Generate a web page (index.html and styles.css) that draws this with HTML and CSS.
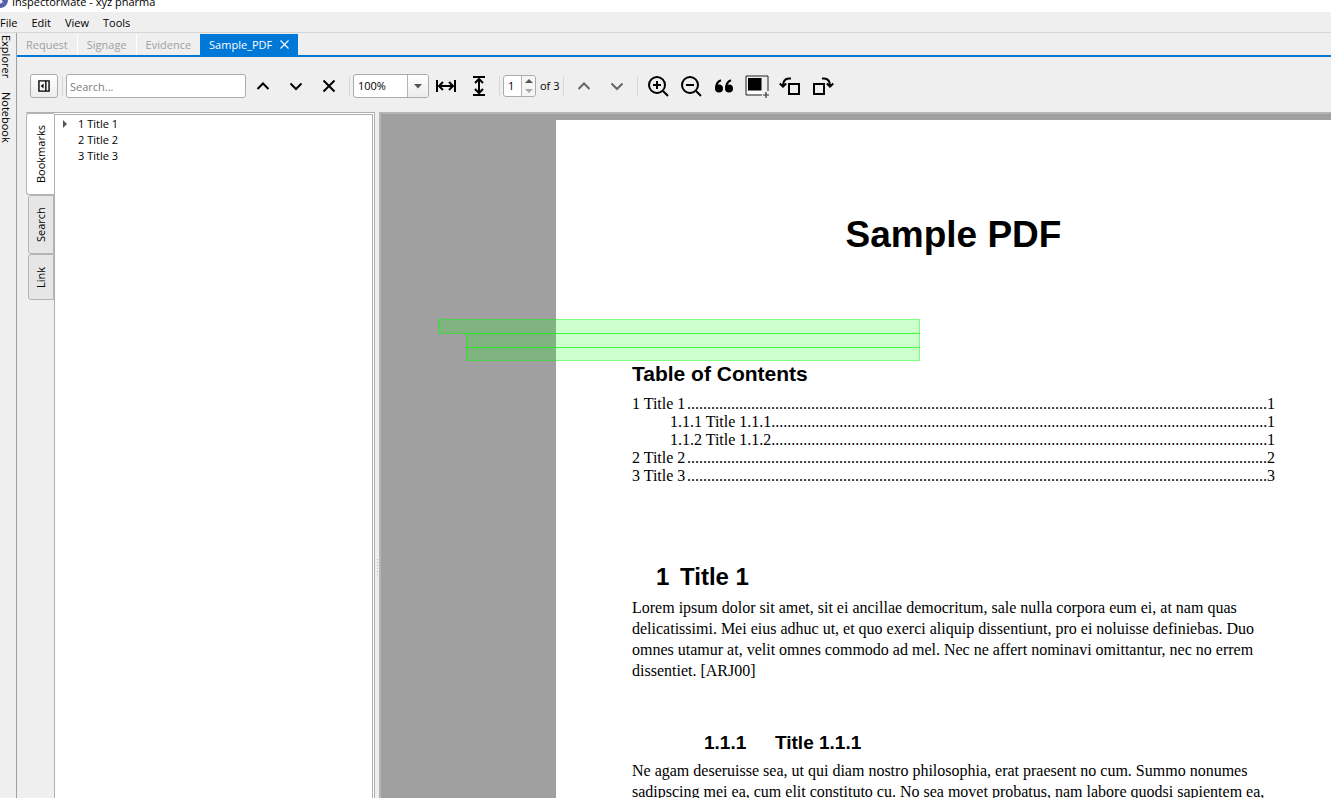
FILE: index.html
```html
<!DOCTYPE html>
<html lang="en">
<head>
<meta charset="utf-8">
<title>InspectorMate - xyz pharma</title>
<link rel="stylesheet" href="styles.css">
</head>
<body>
<header class="titlebar">
  <svg class="app-logo" width="16" height="16" viewBox="0 0 16 16" aria-hidden="true"><circle cx="8" cy="8" r="8" fill="#4a62a8"/><path d="M3 6l6 6 3-1-5-7z" fill="#e8edf8"/><path d="M9 12l4 1-2-4z" fill="#7b5fb0"/></svg>
  <span>InspectorMate - xyz pharma</span>
</header>
<nav class="menubar">
  <button class="menu">File</button>
  <button class="menu">Edit</button>
  <button class="menu">View</button>
  <button class="menu">Tools</button>
</nav>
<div class="workspace">
  <aside class="dock">
    <button class="dock-tab">Explorer</button>
    <button class="dock-tab">Notebook</button>
  </aside>
  <main class="main">
    <div class="tabs">
      <button class="tab">Request</button>
      <button class="tab">Signage</button>
      <button class="tab">Evidence</button>
      <button class="tab tab-active">Sample_PDF
        <svg width="9" height="9" viewBox="0 0 9 9" aria-hidden="true"><path d="M.5.5l8 8M8.5.5l-8 8" stroke="#fff" stroke-width="1.1"/></svg>
      </button>
    </div>
    <div class="toolbar">
      <button class="toggle" aria-label="Toggle side panel">
        <svg width="12" height="12" viewBox="0 0 13 13"><path d="M1 1h11v11H1zM8.500 1v11" fill="none" stroke="#000" stroke-width="1.500"/><path d="M6 3.800v5.400L3 6.500z"/></svg>
      </button>
      <span class="sep"></span>
      <input class="search" type="text" placeholder="Search..." aria-label="Search">
      <button class="tool" aria-label="Previous match"><svg width="24" height="24" viewBox="0 0 24 24"><path d="M6.500 15L12 9.500l5.500 5.500" class="line"/></svg></button>
      <button class="tool" aria-label="Next match"><svg width="24" height="24" viewBox="0 0 24 24"><path d="M6.500 9.500L12 15l5.500-5.500" class="line"/></svg></button>
      <button class="tool" aria-label="Clear search"><svg width="24" height="24" viewBox="0 0 24 24"><path d="M6.500 6.500l11 11M17.500 6.500l-11 11" class="line"/></svg></button>
      <span class="sep"></span>
      <span class="zoom-box">
        <select class="zoom" aria-label="Zoom"><option>100%</option></select>
        <span class="zoom-arrow"><svg width="8" height="5" viewBox="0 0 8 5"><path d="M0 0h8L4 4.500z" fill="#555"/></svg></span>
      </span>
      <button class="tool" aria-label="Fit width"><svg width="24" height="24" viewBox="0 0 24 24"><path d="M3 6v12M21 6v12M5.500 12h13M9 8l-4 4 4 4M15 8l4 4-4 4" class="line"/></svg></button>
      <button class="tool" aria-label="Fit height"><svg width="24" height="24" viewBox="0 0 24 24"><path d="M6 3h12M6 21h12M12 5.500v13M8 9l4-4 4 4M8 15l4 4 4-4" class="line"/></svg></button>
      <span class="sep"></span>
      <span class="spin">
        <input class="spin-input" type="text" value="1" aria-label="Page">
        <span class="spin-arrows">
          <button class="spin-btn" aria-label="Page up"><svg width="8" height="4" viewBox="0 0 8 4"><path d="M0 4h8L4 0z" fill="#555"/></svg></button>
          <button class="spin-btn" aria-label="Page down"><svg width="8" height="4" viewBox="0 0 8 4"><path d="M0 0h8L4 4z" fill="#aaa"/></svg></button>
        </span>
      </span>
      <span class="page-count">of 3</span>
      <span class="sep"></span>
      <button class="tool tool-dim" aria-label="Previous page"><svg width="24" height="24" viewBox="0 0 24 24"><path d="M6.500 15L12 9.500l5.500 5.500" class="line"/></svg></button>
      <button class="tool tool-dim" aria-label="Next page"><svg width="24" height="24" viewBox="0 0 24 24"><path d="M6.500 9.500L12 15l5.500-5.500" class="line"/></svg></button>
      <span class="sep"></span>
      <button class="tool" aria-label="Zoom in"><svg width="24" height="24" viewBox="0 0 24 24"><circle cx="11" cy="11" r="8" class="line"/><path d="M17 17l5 5M11 7v8M7 11h8" class="line"/></svg></button>
      <button class="tool" aria-label="Zoom out"><svg width="24" height="24" viewBox="0 0 24 24"><circle cx="11" cy="11" r="8" class="line"/><path d="M17 17l5 5M7 11h8" class="line"/></svg></button>
      <button class="tool" aria-label="Quote"><svg width="24" height="24" viewBox="0 0 24 24"><circle cx="7" cy="14.500" r="4"/><circle cx="17" cy="14.500" r="4"/><path d="M4 14.500C4 10.500 5.800 7.500 9 6.300M14 14.500c0-4 1.800-7 5-8.200" class="line"/></svg></button>
      <button class="tool" aria-label="Add area"><svg width="24" height="24" viewBox="0 0 24 24"><path d="M1 2h22v19H1z" fill="#eee" stroke="#222"/><path d="M3 16.500h17V20H3z" fill="#fff"/><path d="M3 4h13.500v12.500H3z"/><path d="M17 17h7v7h-7z" fill="#f0f0f0"/><path d="M21 18v6M18 21h6" stroke="#333" stroke-width="1.200"/></svg></button>
      <button class="tool" aria-label="Rotate left"><svg width="24" height="24" viewBox="0 0 24 24"><path d="M11 10h10v10H11zM13 4.500h-2C7.500 4.500 5 6.500 5 12M1.800 9.500L5 12.700l3.200-3.200" class="line"/></svg></button>
      <button class="tool" aria-label="Rotate right"><svg width="24" height="24" viewBox="0 0 24 24"><path d="M3 10h10v10H3zM11 4.500h2c3.500 0 6 2 6 7.500M15.800 9.500l3.200 3.200 3.200-3.200" class="line"/></svg></button>
    </div>
    <div class="content">
      <section class="side">
        <div class="side-tabs">
          <button class="side-tab side-tab-active">Bookmarks</button>
          <button class="side-tab side-tab-search">Search</button>
          <button class="side-tab side-tab-link">Link</button>
        </div>
        <ul class="tree">
          <li class="node"><span class="twist"><svg width="4" height="8" viewBox="0 0 4 8"><path d="M0 0l4 4-4 4z" fill="#555"/></svg></span>1 Title 1</li>
          <li class="node"><span class="twist"></span>2 Title 2</li>
          <li class="node"><span class="twist"></span>3 Title 3</li>
        </ul>
      </section>
      <div class="splitter"><i></i><i></i><i></i><i></i><i></i><i></i></div>
      <section class="viewer">
        <article class="page">
          <h1 class="doc-title">Sample PDF</h1>
          <h2 class="toc-title">Table of Contents</h2>
          <div class="toc">
            <div class="toc-row"><span>1 Title 1</span><span class="leader">.................................................................................................................................................</span><span>1</span></div>
            <div class="toc-row toc-sub"><span>1.1.1 Title 1.1.1</span><span class="leader">............................................................................................................................</span><span>1</span></div>
            <div class="toc-row toc-sub"><span>1.1.2 Title 1.1.2</span><span class="leader">............................................................................................................................</span><span>1</span></div>
            <div class="toc-row"><span>2 Title 2</span><span class="leader">.................................................................................................................................................</span><span>2</span></div>
            <div class="toc-row"><span>3 Title 3</span><span class="leader">.................................................................................................................................................</span><span>3</span></div>
          </div>
          <h2 class="chapter"><span class="chapter-no">1</span>Title 1</h2>
          <p class="para">Lorem ipsum dolor sit amet, sit ei ancillae democritum, sale nulla corpora eum ei, at nam quas delicatissimi. Mei eius adhuc ut, et quo exerci aliquip dissentiunt, pro ei noluisse definiebas. Duo omnes utamur at, velit omnes commodo ad mel. Nec ne affert nominavi omittantur, nec no errem dissentiet. [ARJ00]</p>
          <h3 class="section"><span class="section-no">1.1.1</span>Title 1.1.1</h3>
          <p class="para">Ne agam deseruisse sea, ut qui diam nostro philosophia, erat praesent no cum. Summo nonumes sadipscing mei ea, cum elit constituto cu. No sea movet probatus, nam labore quodsi sapientem ea,</p>
          <div class="mark mark-1"></div>
          <div class="mark mark-2"></div>
          <div class="mark mark-3"></div>
        </article>
      </section>
    </div>
  </main>
</div>
</body>
</html>
```
FILE: styles.css
```css
* { box-sizing: border-box; }
body {
  margin: 0;
  height: 100vh;
  display: flex;
  flex-direction: column;
  overflow: hidden;
  background: #efefef;
  color: #000;
  font: 11px/16px "Open Sans", "Noto Sans", sans-serif;
}
button, input, select { font: inherit; color: inherit; margin: 0; padding: 0; border: 0; background: none; }
button { display: flex; align-items: center; justify-content: center; white-space: nowrap; }
svg { display: block; flex: none; }
.line { fill: none; stroke: currentColor; stroke-width: 2; }

.titlebar {
  flex: none;
  height: 12px;
  display: flex;
  align-items: flex-end;
  gap: 4px;
  overflow: hidden;
  background: #fff;
  line-height: 20px;
}
.app-logo { margin: 0 0 4px -8px; }
.menubar { flex: none; height: 21px; padding-top: 1px; display: flex; border-bottom: 1px solid #d6d6d6; }
.menu { padding: 0 7px; }
.menu:first-child { padding-left: 0; }

.workspace { flex: 1; min-height: 0; display: flex; }
.dock { flex: none; width: 17px; border-right: 1px solid #a0a0a0; display: flex; flex-direction: column; gap: 14px; padding-top: 2px; }
.dock-tab { writing-mode: vertical-rl; width: 12px; }

.main { flex: 1; min-width: 0; display: flex; flex-direction: column; }
.tabs { flex: none; height: 24px; padding-top: 1px; display: flex; border-bottom: 2px solid #0078d7; }
.tab { padding: 0 9px; color: #a0a0a0; border-right: 1px solid #fff; }
.tab:nth-child(3) { border-right: 0; }
.tab-active { background: #0078d7; color: #fff; gap: 8px; border-right: 0; }

.toolbar { flex: none; height: 55px; padding: 3px 0 0 13px; display: flex; align-items: center; }
.toggle, .search, .zoom-box, .spin { border: 1px solid #ababab; border-radius: 3px; height: 24px; flex: none; }
.toggle { width: 28px; background: linear-gradient(#fff, #ececec); }
.sep { flex: none; width: 1px; height: 20px; margin: 0 3px 0 4px; background: #d8d8d8; }
.search { width: 180px; padding: 0 3px; background: #fff; }
.search::placeholder { color: #808080; opacity: 1; }
.tool { width: 33px; height: 28px; flex: none; }
.tool-dim { color: #666; }
.zoom-box { width: 76px; display: flex; background: #fff; overflow: hidden; position: relative; }
.zoom { appearance: none; width: 100%; padding-left: 4px; }
.zoom-arrow { position: absolute; top: 0; right: 0; bottom: 0; width: 21px; border-left: 1px solid #b4b4b4; background: linear-gradient(#fff, #ececec); display: flex; align-items: center; justify-content: center; pointer-events: none; }
.spin { width: 33px; height: 22px; display: flex; background: #fff; overflow: hidden; }
.spin-input { flex: 1; min-width: 0; padding-left: 4px; }
.spin-arrows { width: 14px; border-left: 1px solid #b4b4b4; background: #f6f6f6; display: flex; flex-direction: column; }
.spin-btn { flex: 1; }
.page-count { width: 23px; padding-left: 4px; white-space: nowrap; flex: none; }

.content { flex: 1; min-height: 0; display: flex; }
.side { flex: none; width: 349px; margin-left: 9px; border: solid #b0b0b0; border-width: 1px 1px 0 0; display: flex; background: #fff; }
.side-tabs { flex: none; width: 28px; display: flex; flex-direction: column; align-items: flex-end; background: #efefef; }
.side-tab { writing-mode: vertical-rl; transform: rotate(180deg); width: 26px; border: 1px solid #b4b4b4; border-radius: 0 3px 3px 0; background: #e6e6e6; }
.side-tab-active { width: 28px; height: 82px; background: #fff; border-left: 0; }
.side-tab-search { height: 59px; }
.side-tab-link { height: 46px; }
.tree { flex: 1; list-style: none; margin: 1px 1px 0 0; padding: 1px 0 0 8px; border: solid #b0b0b0; border-width: 1px 1px 0 1px; background: #fff; }
.node { display: flex; align-items: center; height: 16px; }
.twist { width: 15px; flex: none; }
.splitter { flex: none; width: 4px; padding-top: 224px; display: flex; flex-direction: column; align-items: center; justify-content: center; gap: 2px; }
.splitter i { width: 1px; height: 1px; background: #b4b4b4; }

.viewer { flex: 1; min-width: 0; overflow: hidden; border: solid #b4b4b4; border-width: 2px 0 0 2px; background: #a0a0a0; padding: 6px 0 0 175px; }
.page { position: relative; width: 794px; min-height: 1123px; padding: 93px 75px 75px 76px; background: #fff; color: #000; font: 16px/21px "Liberation Serif", serif; }
.doc-title, .toc-title, .chapter, .section { margin: 0; font-family: "Liberation Sans", sans-serif; font-weight: 700; }
.doc-title { font-size: 37px; line-height: 44px; text-align: center; }
.toc-title { font-size: 21px; line-height: 24px; margin: 105px 0 9px; }
.toc { line-height: 18px; }
.toc-row { display: flex; }
.toc-sub { padding-left: 38px; }
.leader { flex: 1; min-width: 0; text-align: right; white-space: nowrap; }
.chapter { display: flex; font-size: 24px; line-height: 28px; margin: 78px 0 6px; padding-left: 24px; }
.chapter-no { width: 24px; }
.section { display: flex; font-size: 19px; line-height: 22px; margin: 51px 0 6px; padding-left: 72px; }
.section-no { width: 71px; }
.para { margin: 0; }
.mark { position: absolute; left: -90px; width: 454px; height: 15px; background: rgba(0, 255, 0, .2); border: 1px solid rgba(0, 255, 0, .4); border-left-color: rgba(0, 255, 0, .7); }
.mark-1 { top: 199px; left: -118px; width: 482px; }
.mark-2 { top: 213px; }
.mark-3 { top: 227px; height: 14px; }
```
